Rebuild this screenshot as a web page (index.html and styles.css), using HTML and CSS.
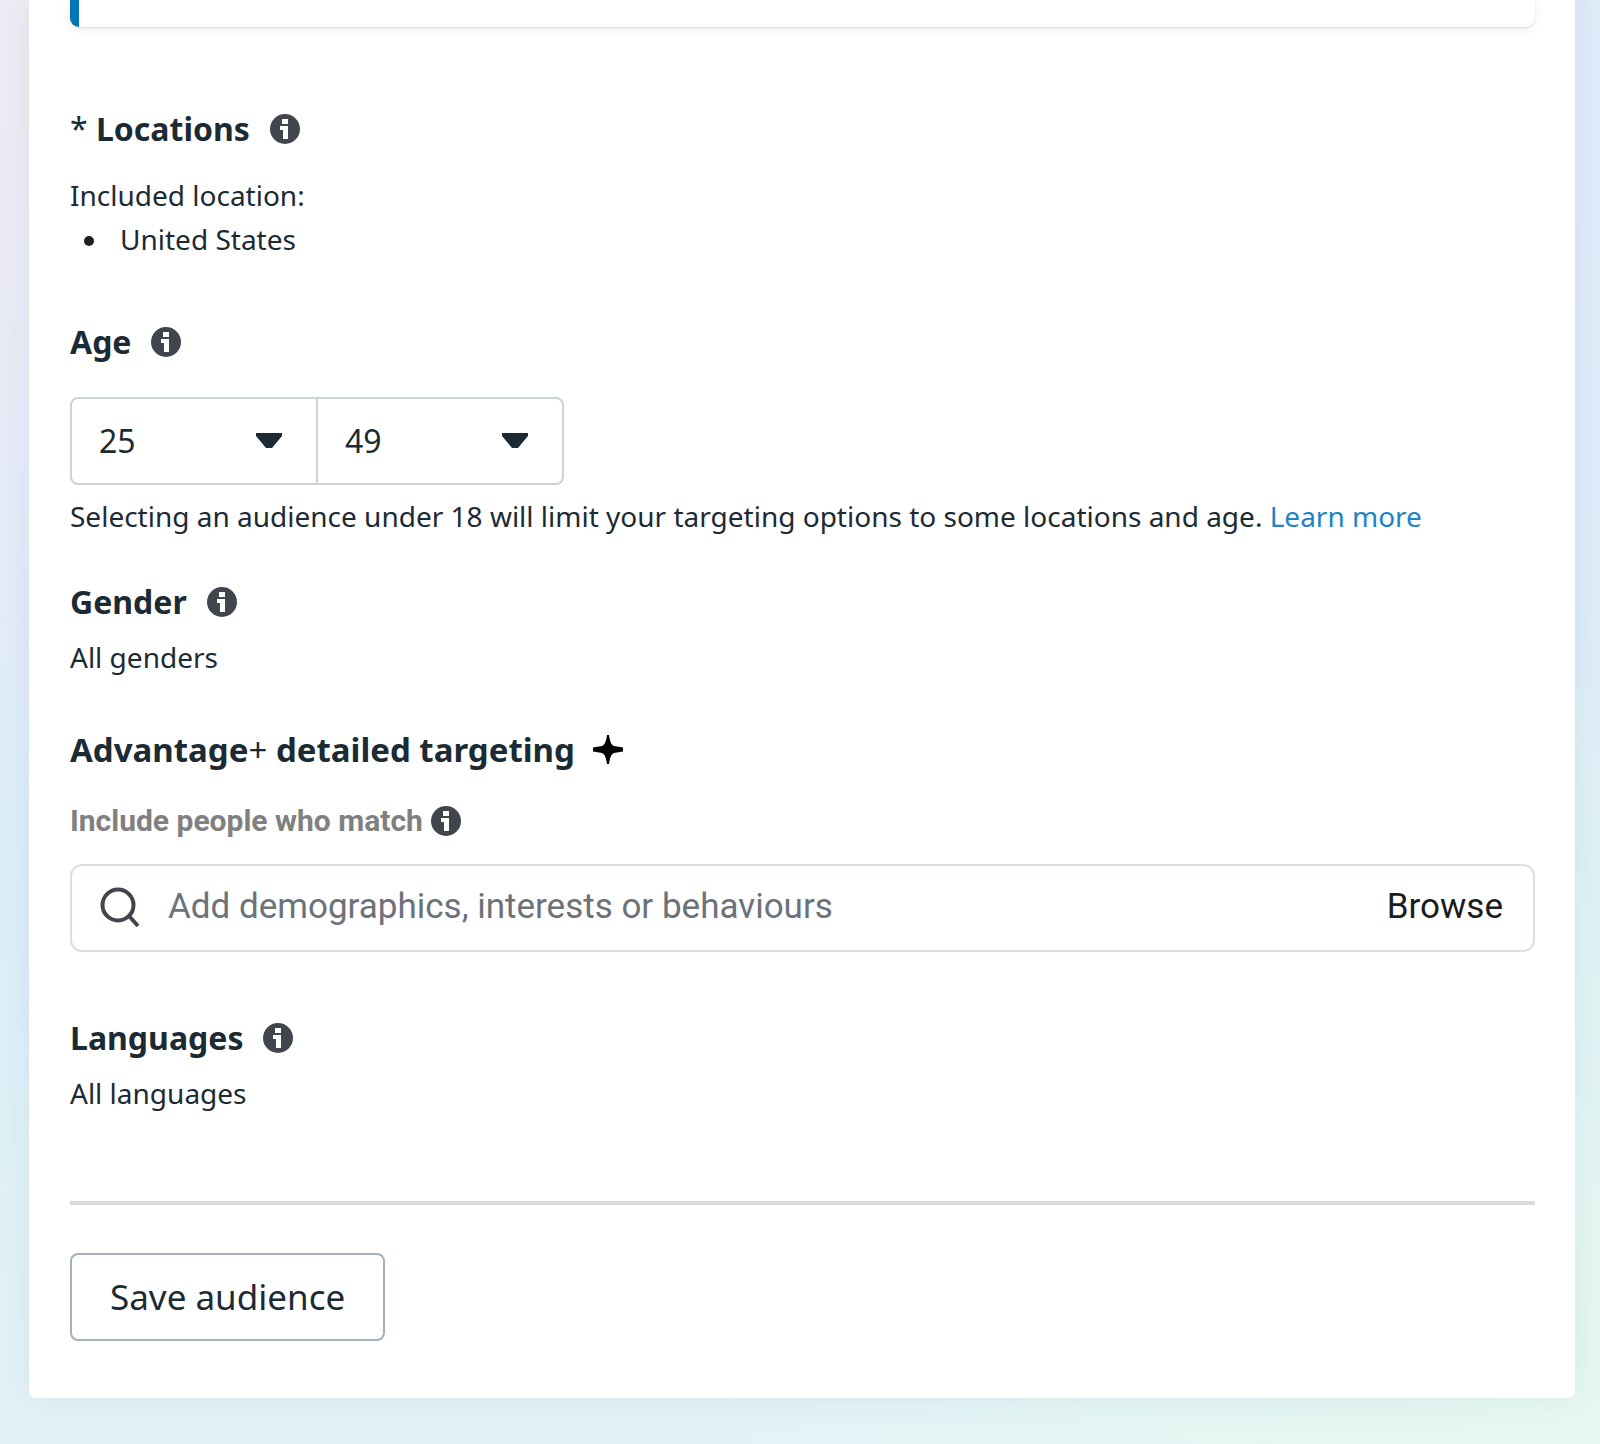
FILE: index.html
```html
<!DOCTYPE html>
<html lang="en">
<head>
<meta charset="utf-8">
<meta name="viewport" content="width=device-width, initial-scale=1">
<title>Audience</title>
<link rel="stylesheet" href="styles.css">
</head>
<body>
<svg class="sprite" aria-hidden="true">
  <symbol id="info" viewBox="0 0 30 30">
    <circle cx="15" cy="15" r="15" fill="#40454e"/>
    <path d="M12 5h6v5h-6zM10 12h8v13h-5v-9h-3z" fill="#fff"/>
  </symbol>
</svg>
<main class="card">
  <div class="notice"></div>
  <form class="form">
    <section class="locations">
      <h2 class="heading"><span><span class="light">*</span> Locations</span> <svg class="icon"><use href="#info"/></svg></h2>
      <div class="location-list">
        <p class="text">Included location:</p>
        <ul class="list"><li class="list-item">United States</li></ul>
      </div>
    </section>

    <section class="age">
      <h2 class="heading">Age <svg class="icon"><use href="#info"/></svg></h2>
      <div class="range">
        <div class="picker">
          <select class="select" aria-label="Minimum age"><option>25</option></select>
          <svg class="caret" viewBox="0 0 26 16"><path d="M0 0h26v3L16 15h-6L0 3z"/></svg>
        </div>
        <div class="picker">
          <select class="select" aria-label="Maximum age"><option>49</option></select>
          <svg class="caret" viewBox="0 0 26 16"><path d="M0 0h26v3L16 15h-6L0 3z"/></svg>
        </div>
      </div>
      <p class="text">Selecting an audience under 18 will limit your targeting options to some locations and age. <a class="link" href="#">Learn more</a></p>
    </section>

    <section class="gender">
      <h2 class="heading">Gender <svg class="icon"><use href="#info"/></svg></h2>
      <p class="text">All genders</p>
    </section>

    <section class="targeting">
      <h2 class="heading heading-wide"><span>Advantage<span class="light">+</span> detailed targeting</span>
        <svg class="icon" viewBox="0 0 30 30"><path d="M14 0h2c1 7 2.500 10 5 11l9 1.500v4L21 18c-2.500 1-4 4-5 11h-2c-1-7-2.500-10-5-11l-9-1.500v-4L9 11c2.500-1 4-4 5-11z"/></svg>
      </h2>
      <div class="label-row">
        <label class="label" for="detail">Include people who match</label>
        <svg class="icon"><use href="#info"/></svg>
      </div>
      <div class="search">
        <svg class="search-icon" viewBox="0 0 40 42"><circle cx="18" cy="18" r="15.500"/><path d="M29 29l9 10"/></svg>
        <input class="search-input" id="detail" type="text" placeholder="Add demographics, interests or behaviours">
        <button class="browse" type="button">Browse</button>
      </div>
    </section>

    <section class="languages">
      <h2 class="heading">Languages <svg class="icon"><use href="#info"/></svg></h2>
      <p class="text">All languages</p>
    </section>

    <hr class="divider">
    <button class="save" type="button">Save audience</button>
  </form>
</main>
</body>
</html>
```

FILE: styles.css
```css
* {
  box-sizing: border-box;
}

body {
  margin: 0;
  padding: 0 25px 46px 29px;
  background:
    radial-gradient(ellipse at 100% 100%, #e6f8f0 0%, rgba(230, 248, 240, 0) 40%),
    radial-gradient(ellipse at 0% 0%, #f0ebf4 0%, rgba(236, 234, 245, 0) 40%),
    linear-gradient(180deg, #e0eaf8 0%, #deecf8 40%, #dceff6 65%, #e4f2f6 100%);
  color: #1c2b33;
  font-family: "Noto Sans", sans-serif;
  font-size: 28px;
  line-height: 44px;
}

.sprite {
  position: absolute;
  width: 0;
  height: 0;
}

.card {
  padding: 0 40px 57px 41px;
  background: #fff;
  border-radius: 0 0 7px 7px;
  box-shadow: 0 0 32px rgba(90, 140, 180, 0.12);
}

.notice {
  height: 27px;
  border-left: 9px solid #0075b8;
  border-radius: 0 0 9px 9px;
  box-shadow: 0 1px 2px rgba(0, 0, 0, 0.12), 0 2px 12px rgba(0, 0, 0, 0.06);
}

.form {
  padding-top: 80px;
}

.heading {
  display: flex;
  align-items: center;
  gap: 20px;
  margin: 0;
  font-size: 32px;
  font-weight: 700;
  line-height: 44px;
}

.heading-wide {
  gap: 18px;
  font-size: 33px;
}

.light {
  font-weight: 400;
}

.icon {
  flex: none;
  width: 30px;
  height: 30px;
}

.text {
  margin: 0;
}

.list {
  margin: 0;
  padding-left: 14px;
  list-style: none;
}

.list-item {
  display: flex;
  align-items: center;
  gap: 26px;
}

.list-item::before {
  width: 10px;
  height: 10px;
  margin-top: 4px;
  border-radius: 50%;
  background: #1c1e21;
  content: "";
}

.location-list {
  margin-top: 22px;
}

.age {
  margin-top: 59px;
}

.range {
  display: flex;
  width: 494px;
  height: 88px;
  margin: 33px 0 9px;
  border: 2px solid #cbd2d9;
  border-radius: 8px;
}

.picker {
  display: grid;
  flex: 1;
  align-items: center;
}

.picker + .picker {
  border-left: 2px solid #cbd2d9;
}

.select,
.caret {
  grid-area: 1 / 1;
}

.select {
  width: 100%;
  height: 100%;
  padding: 0 27px;
  border: 0;
  background: transparent;
  color: inherit;
  font: inherit;
  font-size: 32px;
  appearance: none;
}

.caret {
  justify-self: end;
  width: 26px;
  height: 16px;
  margin-right: 34px;
  fill: #1c2b33;
  pointer-events: none;
}

.link {
  color: #1c84c6;
  text-decoration: none;
}

.gender {
  margin-top: 42px;
}

.gender .text,
.languages .text {
  margin-top: 11px;
}

.targeting {
  margin-top: 49px;
}

.label-row {
  display: flex;
  align-items: center;
  gap: 8px;
  margin: 27px 0 21px;
}

.label {
  color: #808080;
  font-family: Roboto, sans-serif;
  font-size: 30px;
  font-weight: 700;
}

.search {
  display: flex;
  align-items: center;
  height: 88px;
  padding: 0 30px 0 28px;
  border: 2px solid #dadde1;
  border-radius: 12px;
}

.search-icon {
  flex: none;
  width: 40px;
  height: 42px;
  fill: none;
  stroke: #40454e;
  stroke-width: 4;
}

.search-input {
  flex: 1;
  min-width: 0;
  padding: 0 0 4px 28px;
  border: 0;
  background: transparent;
  color: #1c2b33;
  font-family: Roboto, sans-serif;
  font-size: 35px;
}

.search-input::placeholder {
  color: #6b727a;
  opacity: 1;
}

.browse {
  padding: 0 0 4px;
  border: 0;
  background: transparent;
  color: #1c1c1c;
  font-family: Roboto, sans-serif;
  font-size: 35px;
}

.languages {
  margin-top: 64px;
}

.divider {
  height: 4px;
  margin: 86px 0 48px;
  border: 0;
  background: #d9dcde;
}

.save {
  height: 88px;
  padding: 0 38px;
  border: 2px solid #a3b1bf;
  border-radius: 8px;
  background: #fff;
  color: #1c2b33;
  font: inherit;
  font-size: 35px;
}
```
